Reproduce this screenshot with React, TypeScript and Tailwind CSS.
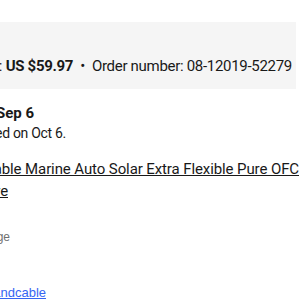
import React from "react";

const market = { fontFamily: "Roboto, 'Open Sans', sans-serif" };
const arial = { fontFamily: "'Liberation Sans', Arial, sans-serif" };

// Each row ends where the page crop shows it; the start runs off the left edge.
const Row: React.FC<{ end: string; className?: string; style?: React.CSSProperties; children: React.ReactNode }> = ({
    end,
    className,
    style,
    children,
}) => (
    <div className={`flex justify-end ${end}`}>
        <div className={`shrink-0 whitespace-nowrap ${className ?? ""}`} style={style}>
            {children}
        </div>
    </div>
);

export default function App() {
    return (
        <div className="w-[300px] h-[300px] overflow-hidden bg-white text-[#191919]" style={market}>
            <div className="h-[22px]" />
            <div className="w-[296px] h-[67px] bg-[#f5f5f5] pt-[34px] overflow-hidden">
                <Row end="w-[292px]" className="text-[15px] leading-[20px] tracking-[-0.3px]">
                    <span>Order total: </span>
                    <span className="font-bold">US $59.97</span>
                    <span className="mx-[7px]">•</span>
                    <span>Order number: 08-12019-52279</span>
                </Row>
            </div>
            <div className="flex flex-col pt-[15px]">
                <Row end="w-[34px]" className="text-[15px] font-bold leading-[19px]">
                    Estimated delivery Sep 6
                </Row>
                <Row end="w-[66px]" className="text-[14px] leading-[20px] tracking-[-0.3px]">
                    Returns accepted if requested on Oct 6.
                </Row>
                <a className="mt-[15px] flex flex-col underline text-[15px] leading-[22px] tracking-[-0.1px]">
                    <Row end="w-[299px]">
                        10 Gauge Tinned Copper Battery Cable Marine Auto Solar Extra Flexible Pure OFC
                    </Row>
                    <Row end="w-[8px]">Wire</Row>
                </a>
                <Row end="w-[10px] mt-[27px]" className="text-[12px] leading-[16px] text-[#707070]" style={arial}>
                    Send a message
                </Row>
                <a className="mt-[39px] flex flex-col">
                    <Row end="w-[46px]" className="text-[13px] leading-[18px] text-[#3665f3] underline" style={arial}>
                        wireandcable
                    </Row>
                </a>
            </div>
        </div>
    );
}
